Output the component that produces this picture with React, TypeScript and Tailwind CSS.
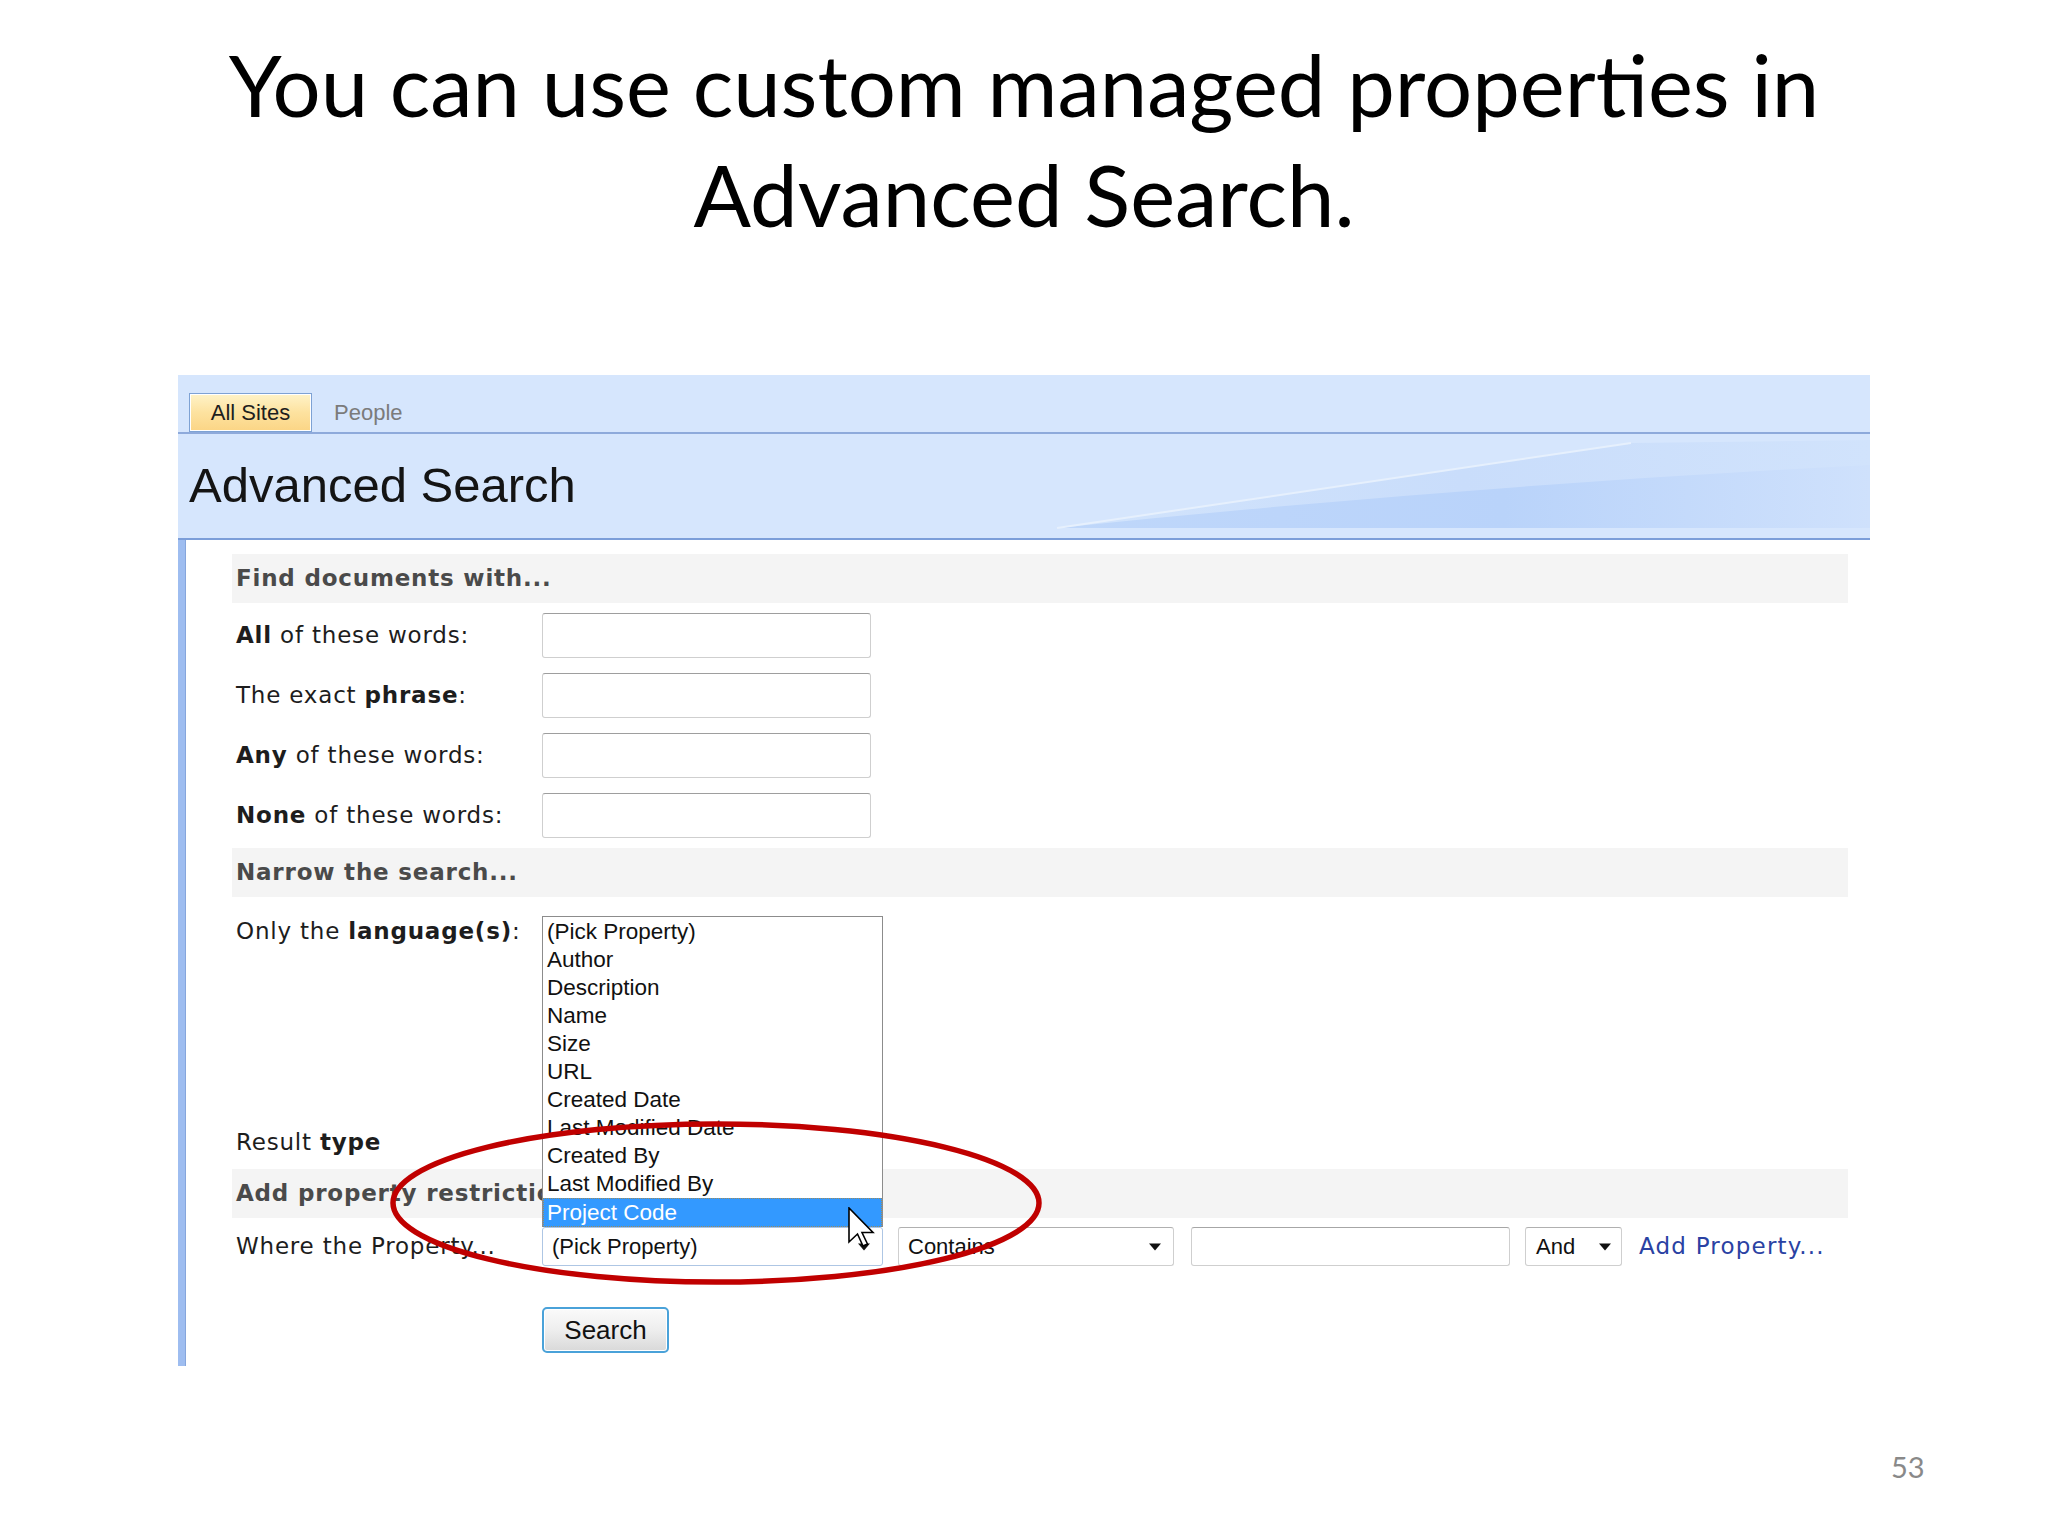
import React from "react";

const LABEL = "font-['DejaVu_Sans',Verdana,sans-serif] text-[23px] tracking-[0.8px] text-[#1d1d1d]";
const UI = "font-['Liberation_Sans',Arial,sans-serif]";

function Bar({ children }: { children: React.ReactNode }) {
  return (
    <div className="h-[49px] bg-[#f4f4f4] flex items-center pl-[4px] font-['DejaVu_Sans',Verdana,sans-serif] font-bold text-[23px] tracking-[0.8px] text-[#4a4a4a] whitespace-nowrap overflow-hidden">
      {children}
    </div>
  );
}

function Arrow() {
  return (
    <svg width="14" height="8" viewBox="0 0 14 8" className="shrink-0">
      <path d="M1 0.5 L13 0.5 L7 7.5 Z" fill="#111" />
    </svg>
  );
}

const items = [
  "(Pick Property)",
  "Author",
  "Description",
  "Name",
  "Size",
  "URL",
  "Created Date",
  "Last Modified Date",
  "Created By",
  "Last Modified By",
];

export default function App() {
  const rows: React.ReactNode[] = [
    <><b>All</b> of these words:</>,
    <>The exact <b>phrase</b>:</>,
    <><b>Any</b> of these words:</>,
    <><b>None</b> of these words:</>,
  ];
  return (
    <div className="relative w-[2048px] h-[1536px] bg-white overflow-hidden">
      <h1 className="h-[251px] pt-[29px] text-center font-['Lato',sans-serif] text-[85px] leading-[110px] text-black font-normal">
        You can use custom managed properties in
        <br />
        Advanced Search.
      </h1>

      <div className="ml-[178px] mt-[124px] w-[1692px]">
        {/* header */}
        <div className="bg-[#d6e6fd]">
          <div className={`h-[59px] flex items-end pl-[11px] border-b-2 border-[#8eaadb] ${UI}`}>
            <div className="h-[39px] w-[123px] border border-[#7ea2d4] shadow-[inset_0_0_0_1px_#ffffff] bg-gradient-to-b from-[#fff3c8] via-[#fde29f] to-[#fbd585] flex items-center justify-center text-[22px] text-[#1e1e1e]">
              All Sites
            </div>
            <div className="h-[39px] flex items-center pl-[22px] text-[22px] text-[#7b7b7b]">People</div>
          </div>
          <div className={`relative h-[106px] border-b-2 border-[#7c9ed9] pl-[11px] pt-[23px] ${UI}`}>
            <svg className="absolute right-0 top-0" width="830" height="104" viewBox="0 0 830 104">
              <defs>
                <linearGradient id="w1" x1="0" y1="0" x2="1" y2="0">
                  <stop offset="0" stopColor="#d2e4fc" />
                  <stop offset="0.5" stopColor="#c9ddfb" />
                  <stop offset="1" stopColor="#d1e3fc" />
                </linearGradient>
                <linearGradient id="w2" x1="0" y1="0" x2="1" y2="0">
                  <stop offset="0" stopColor="#bfd7fa" />
                  <stop offset="0.55" stopColor="#b9d3fa" />
                  <stop offset="1" stopColor="#cfe1fc" />
                </linearGradient>
              </defs>
              <path d="M17 94 L591 9 L830 6 L830 94 Z" fill="url(#w1)" />
              <path d="M17 94 Q 420 52 830 31 L830 94 Z" fill="url(#w2)" />
              <path d="M17 94 L591 9" stroke="#e6f0fd" strokeWidth="2" fill="none" />
            </svg>
            <div className="relative text-[49px] leading-[56px] text-[#141414]">Advanced Search</div>
          </div>
        </div>

        {/* body */}
        <div className="flex">
          <div className="w-[7px] bg-[#9ebdf0]" />
          <div className="w-px bg-[#86a6dc]" />
          <div className="flex-1 pl-[46px] pr-[22px] pt-[14px] pb-[13px] bg-white">
            <Bar>Find documents with...</Bar>
            <div className="mt-[10px] flex flex-col gap-[15px]">
              {rows.map((r, i) => (
                <div key={i} className="flex items-center h-[45px]">
                  <div className={`w-[310px] pl-[4px] whitespace-nowrap ${LABEL}`}>{r}</div>
                  <div className="w-[329px] h-[45px] border border-[#cfcfcf] border-t-[#9e9e9e] rounded-[3px] bg-white" />
                </div>
              ))}
            </div>
            <div className="mt-[10px]">
              <Bar>Narrow the search...</Bar>
            </div>
            <div className="mt-[19px] h-[207px] flex items-start">
              <div className={`pl-[4px] leading-[30px] whitespace-nowrap ${LABEL}`}>
                Only the <b>language(s)</b>:
              </div>
            </div>
            <div className="h-[38px] flex items-center">
              <div className={`pl-[4px] whitespace-nowrap ${LABEL}`}>
                Result <b>type</b>
              </div>
            </div>
            <div className="mt-[8px]">
              <Bar>Add property restrictions...</Bar>
            </div>
            <div className={`mt-[9px] h-[39px] flex items-center ${UI}`}>
              <div className={`w-[310px] pl-[4px] whitespace-nowrap ${LABEL}`}>Where the Property...</div>
              <div className="relative w-[341px] h-[39px]">
                <div className="h-full border border-[#aec6e4] rounded-[3px] bg-white flex items-center justify-between pl-[9px] pr-[11px] text-[22px] text-[#111]">
                  <span>(Pick Property)</span>
                  <Arrow />
                </div>
                <div className="absolute left-0 bottom-full w-[341px] border-x border-t border-[#8c8c8c] bg-white pt-[1px] text-[22.5px] text-[#111] z-10">
                  {items.map((t) => (
                    <div key={t} className="h-[28px] leading-[28px] pl-[4px] whitespace-nowrap">
                      {t}
                    </div>
                  ))}
                  <div className="h-[29px] leading-[27px] pl-[3px] bg-[#3399ff] text-white border border-dotted border-[#9c8a5c]">
                    Project Code
                  </div>
                </div>
              </div>
              <div className="ml-[15px] w-[276px] h-[39px] border border-[#cfcfcf] border-t-[#b0b0b0] rounded-[3px] bg-white flex items-center justify-between pl-[9px] pr-[11px] text-[22px] text-[#111]">
                <span>Contains</span>
                <Arrow />
              </div>
              <div className="ml-[17px] w-[319px] h-[39px] border border-[#cfcfcf] border-t-[#a6a6a6] rounded-[3px] bg-white" />
              <div className="ml-[15px] w-[97px] h-[39px] border border-[#cfcfcf] border-t-[#b0b0b0] rounded-[3px] bg-white flex items-center justify-between pl-[10px] pr-[9px] text-[22px] text-[#111]">
                <span>And</span>
                <Arrow />
              </div>
              <div className="ml-[17px] font-['DejaVu_Sans',Verdana,sans-serif] text-[23px] tracking-[1.2px] text-[#2a42a3] whitespace-nowrap">
                Add Property...
              </div>
            </div>
            <div className="mt-[41px] pl-[310px]">
              <div className={`w-[127px] h-[46px] rounded-[5px] border-2 border-[#4aa2d9] bg-gradient-to-b from-[#fafafa] via-[#eeeeee] to-[#d9d9d9] shadow-[inset_0_0_0_1px_#ffffff] flex items-center justify-center text-[26px] text-[#111] ${UI}`}>
                Search
              </div>
            </div>
          </div>
        </div>
      </div>

      {/* annotation ellipse */}
      <svg className="absolute left-0 top-0 pointer-events-none z-20" width="2048" height="1536" viewBox="0 0 2048 1536">
        <ellipse cx="716" cy="1203" rx="323" ry="79" fill="none" stroke="#c00000" strokeWidth="5.5" />
      </svg>

      {/* mouse cursor */}
      <svg className="absolute left-[848px] top-[1207px] z-30" width="30" height="42" viewBox="0 0 30 42">
        <path
          d="M1 1 L1 35 L9.5 27 L15 39 L19.5 37 L14 25.5 L25 25.5 Z"
          fill="#ffffff"
          stroke="#000000"
          strokeWidth="1.6"
          strokeLinejoin="miter"
        />
      </svg>

      <div className="absolute left-[1891px] top-[1452px] font-['Lato',sans-serif] text-[29px] leading-[30px] text-[#898989]">
        53
      </div>
    </div>
  );
}
